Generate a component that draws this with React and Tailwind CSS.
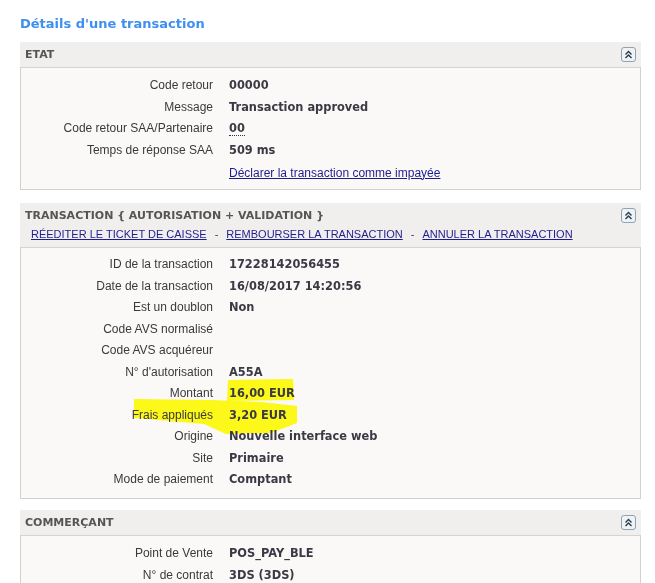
import React from "react";

const font = { fontFamily: '"Liberation Sans", Arial, sans-serif' };
const boldFont = { fontFamily: '"DejaVu Sans", Verdana, sans-serif' };

function CollapseIcon() {
    return (
        <span className="flex h-[15px] w-[15px] items-center justify-center rounded-[3px] border border-[#8fa3b3] bg-[#eef3f7]">
            <svg width="9" height="9" viewBox="0 0 9 9" fill="none" stroke="#2b3a46" strokeWidth="1.4">
                <path d="M1.5 4.5 L4.5 1.5 L7.5 4.5" />
                <path d="M1.5 8 L4.5 5 L7.5 8" />
            </svg>
        </span>
    );
}

function Row({ label, children, rowH = "h-[21.7px] leading-[21.7px]" }) {
    return (
        <div className={`grid grid-cols-[192px_1fr] gap-4 items-baseline ${rowH}`}>
            <div className="text-right text-[#3a3a3a]">{label}</div>
            <div className="font-bold text-[11.4px] text-[#3a3a44]" style={boldFont}>
                {children}
            </div>
        </div>
    );
}

function Panel({ title, links, children, bodyClass }) {
    return (
        <div className="w-[621px]">
            <div className="flex items-start justify-between bg-[#f1eeee] border-b border-[#d6d3d3] px-[5px] pt-[5px] pb-[5px]">
                <div>
                    <div
                        className="font-bold text-[11px] text-[#555] h-[15px] leading-[15px]"
                        style={boldFont}
                    >
                        {title}
                    </div>
                    {links && <div className="mt-[4px] leading-[15px] text-[11px]">{links}</div>}
                </div>
                <CollapseIcon />
            </div>
            <div className={`bg-[#fbf8f8] border-x border-b border-[#d3d0d0] ${bodyClass}`}>{children}</div>
        </div>
    );
}

const linkCls = "text-[#1e1e8c] underline";
const r2 = "h-[21.5px] leading-[21.5px]";

export default function App() {
    return (
        <div className="min-h-[583px] bg-white pl-[20px] pt-[15px] text-[12px]" style={font}>
            <h1
                className="text-[13px] font-bold text-[#3d8ff0] leading-[18px] mb-[9px]"
                style={boldFont}
            >
                Détails d'une transaction
            </h1>

            <Panel title="ETAT" bodyClass="pt-[7px] pb-[6px]">
                <Row label="Code retour">00000</Row>
                <Row label="Message">Transaction approved</Row>
                <Row label="Code retour SAA/Partenaire">
                    <span className="border-b border-dotted border-[#333]">00</span>
                </Row>
                <Row label="Temps de réponse SAA">509 ms</Row>
                <div className="grid grid-cols-[192px_1fr] gap-4 items-center h-[21.7px]">
                    <div />
                    <div>
                        <a className={linkCls}>Déclarer la transaction comme impayée</a>
                    </div>
                </div>
            </Panel>

            <div className="h-[13px]" />

            <Panel
                title="TRANSACTION { AUTORISATION + VALIDATION }"
                links={
                    <span className="pl-[6px]">
                        <a className={linkCls}>RÉEDITER LE TICKET DE CAISSE</a>
                        <span className="text-[#444] px-[8px]">-</span>
                        <a className={linkCls}>REMBOURSER LA TRANSACTION</a>
                        <span className="text-[#444] px-[8px]">-</span>
                        <a className={linkCls}>ANNULER LA TRANSACTION</a>
                    </span>
                }
                bodyClass="pt-[6px] pb-[7px] relative"
            >
                <svg
                    className="absolute left-0 top-0 pointer-events-none mix-blend-multiply"
                    width="621"
                    height="250"
                >
                    <polygon points="207,132 272,131 273,152 206,153" fill="#ffff1a" />
                    <polygon
                        points="113,151 190,152 240,154 276,158 276,175 250,185 205,186 183,176 113,170"
                        fill="#ffff1a"
                    />
                </svg>
                <div className="relative">
                    <Row label="ID de la transaction" rowH={r2}>17228142056455</Row>
                    <Row label="Date de la transaction" rowH={r2}>16/08/2017 14:20:56</Row>
                    <Row label="Est un doublon" rowH={r2}>Non</Row>
                    <Row label="Code AVS normalisé" rowH={r2}></Row>
                    <Row label="Code AVS acquéreur" rowH={r2}></Row>
                    <Row label="N° d'autorisation" rowH={r2}>A55A</Row>
                    <Row label="Montant" rowH={r2}>16,00 EUR</Row>
                    <Row label="Frais appliqués" rowH={r2}>3,20 EUR</Row>
                    <Row label="Origine" rowH={r2}>Nouvelle interface web</Row>
                    <Row label="Site" rowH={r2}>Primaire</Row>
                    <Row label="Mode de paiement" rowH={r2}>Comptant</Row>
                </div>
            </Panel>

            <div className="h-[11px]" />

            <Panel title="COMMERÇANT" bodyClass="pt-[7px] pb-[6px]">
                <Row label="Point de Vente">POS_PAY_BLE</Row>
                <Row label="N° de contrat">3DS (3DS)</Row>
            </Panel>
        </div>
    );
}
